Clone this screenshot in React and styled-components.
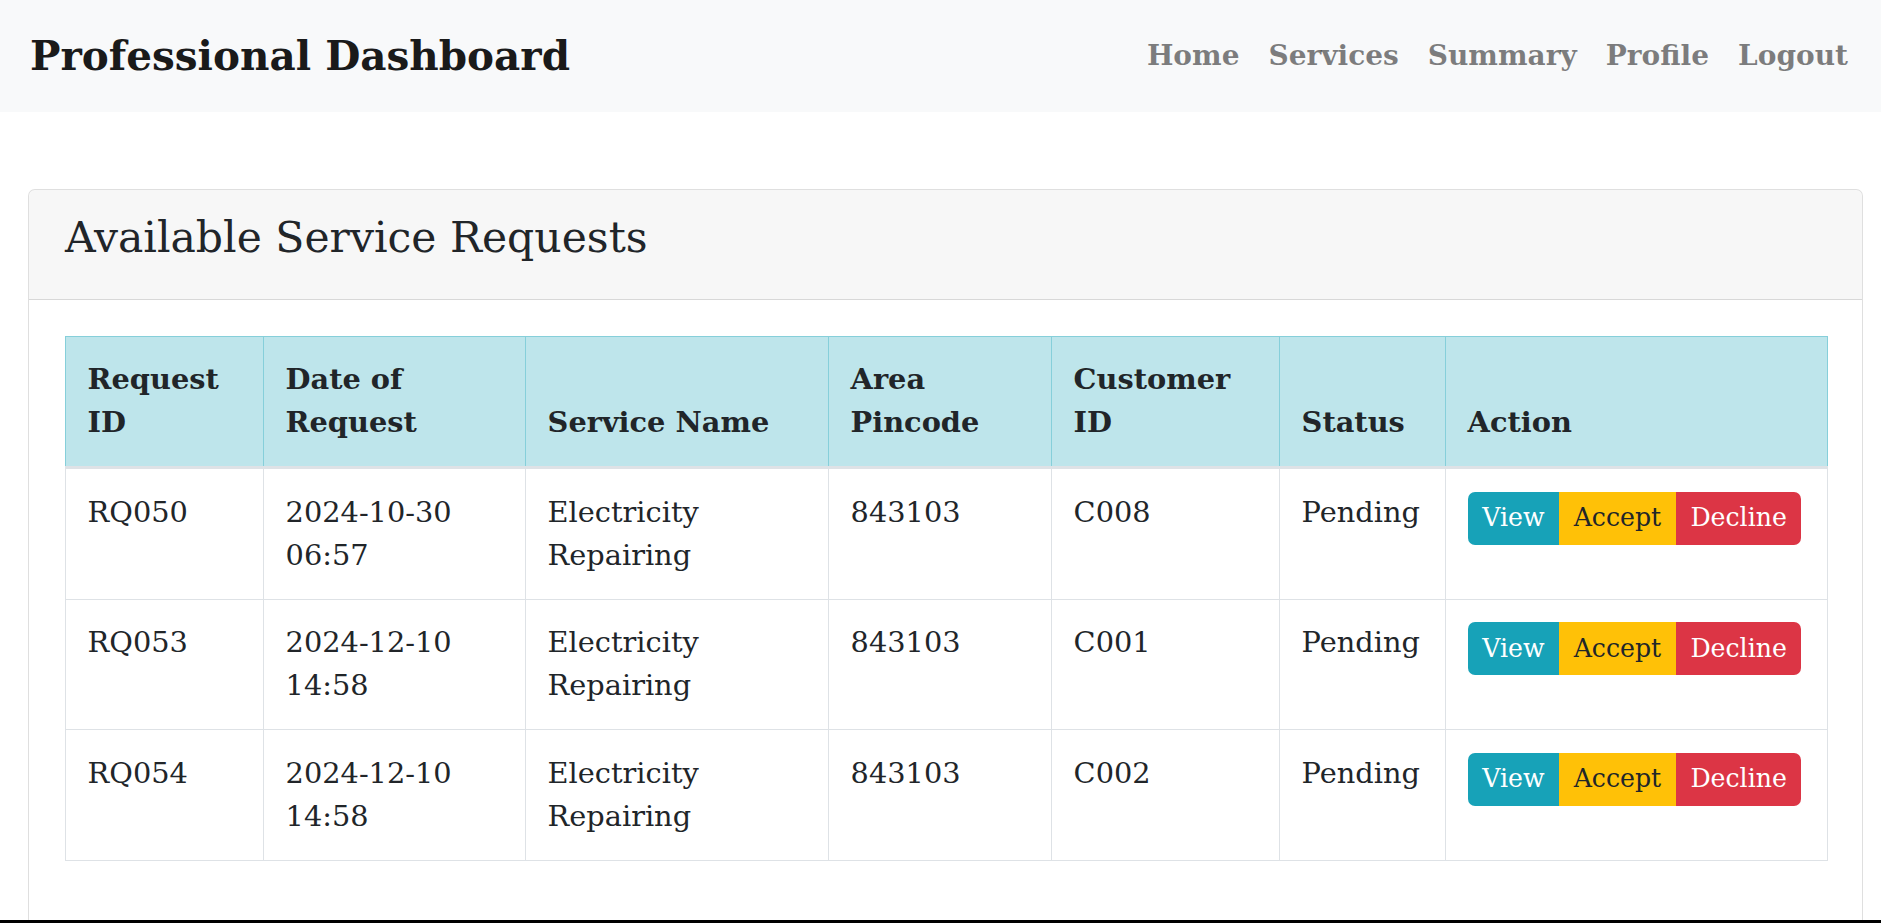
import React from 'react'
import styled, { createGlobalStyle } from 'styled-components'

const GlobalStyle = createGlobalStyle`
  html, body {
    margin: 0;
    padding: 0;
    background: #fff;
  }
  body {
    font-family: "DejaVu Serif", "Liberation Serif", serif;
    font-size: 28.8px;
    line-height: 1.5;
    color: #212529;
  }
`

const Navbar = styled.nav`
  display: flex;
  align-items: center;
  justify-content: space-between;
  height: 112px;
  padding: 0 33px 0 30px;
  background: #f8f9fa;
  box-sizing: border-box;
`

const Brand = styled.div`
  font-size: 40.5px;
  font-weight: 700;
  line-height: 1.2;
  color: #1a1a1a;
`

const NavLinks = styled.div`
  display: flex;
  gap: 29px;
`

const NavLink = styled.a`
  font-size: 28px;
  font-weight: 700;
  color: rgba(0, 0, 0, 0.5);
  text-decoration: none;
`

const Main = styled.main`
  padding: 77px 18px 0 28px;
`

const Card = styled.section`
  border: 1px solid rgba(0, 0, 0, 0.125);
  border-radius: 7px;
  background: #fff;
`

const CardHeader = styled.header`
  padding: 21.6px 36px;
  background: rgba(0, 0, 0, 0.03);
  border-bottom: 1px solid rgba(0, 0, 0, 0.125);
  border-radius: 7px 7px 0 0;
`

const Title = styled.h4`
  margin: 0 0 14.4px;
  font-size: 42.5px;
  font-weight: 400;
  line-height: 1.2;
`

const CardBody = styled.div`
  padding: 36px;
`

const Table = styled.table`
  width: 100%;
  table-layout: fixed;
  border-collapse: collapse;
  margin-bottom: 29px;
  border: 1px solid #dee2e6;
`

const Th = styled.th`
  padding: 21.6px;
  text-align: left;
  vertical-align: bottom;
  font-weight: 700;
  background: #bee5eb;
  border: 1px solid #86cfda;
  border-bottom: 3px solid #dee2e6;
`

const Td = styled.td`
  padding: 21.6px;
  vertical-align: top;
  border: 1px solid #dee2e6;
`

const BtnGroup = styled.div`
  display: inline-flex;
  margin-top: 1px;
  border-radius: 7px;
  overflow: hidden;
`

const tones = {
  info: { bg: '#17a2b8', fg: '#fff' },
  warning: { bg: '#ffc107', fg: '#212529' },
  danger: { bg: '#dc3545', fg: '#fff' },
}

const Btn = styled.button`
  height: 53px;
  padding: 0 14.6px;
  border: none;
  font-family: inherit;
  font-size: 25.2px;
  line-height: 1.5;
  background: ${(p) => tones[p.$tone].bg};
  color: ${(p) => tones[p.$tone].fg};
  cursor: pointer;
`

const BottomEdge = styled.div`
  position: fixed;
  left: 0;
  right: 0;
  bottom: 0;
  height: 3px;
  background: #000;
`

const columns = [
  { label: 'Request ID', width: 198 },
  { label: 'Date of Request', width: 262 },
  { label: 'Service Name', width: 303 },
  { label: 'Area Pincode', width: 223 },
  { label: 'Customer ID', width: 228 },
  { label: 'Status', width: 166 },
  { label: 'Action', width: 382 },
]

const requests = [
  { id: 'RQ050', date: '2024-10-30 06:57', service: 'Electricity Repairing', pin: '843103', customer: 'C008', status: 'Pending' },
  { id: 'RQ053', date: '2024-12-10 14:58', service: 'Electricity Repairing', pin: '843103', customer: 'C001', status: 'Pending' },
  { id: 'RQ054', date: '2024-12-10 14:58', service: 'Electricity Repairing', pin: '843103', customer: 'C002', status: 'Pending' },
]

export default function App() {
  return (
    <>
      <GlobalStyle />
      <Navbar>
        <Brand>Professional Dashboard</Brand>
        <NavLinks>
          {['Home', 'Services', 'Summary', 'Profile', 'Logout'].map((l) => (
            <NavLink key={l} href="#">{l}</NavLink>
          ))}
        </NavLinks>
      </Navbar>
      <Main>
        <Card>
          <CardHeader>
            <Title>Available Service Requests</Title>
          </CardHeader>
          <CardBody>
            <Table>
              <colgroup>
                {columns.map((c) => (
                  <col key={c.label} style={{ width: c.width }} />
                ))}
              </colgroup>
              <thead>
                <tr>
                  {columns.map((c) => (
                    <Th key={c.label}>{c.label}</Th>
                  ))}
                </tr>
              </thead>
              <tbody>
                {requests.map((r) => (
                  <tr key={r.id}>
                    <Td>{r.id}</Td>
                    <Td>{r.date}</Td>
                    <Td>{r.service}</Td>
                    <Td>{r.pin}</Td>
                    <Td>{r.customer}</Td>
                    <Td>{r.status}</Td>
                    <Td>
                      <BtnGroup>
                        <Btn $tone="info">View</Btn>
                        <Btn $tone="warning">Accept</Btn>
                        <Btn $tone="danger">Decline</Btn>
                      </BtnGroup>
                    </Td>
                  </tr>
                ))}
              </tbody>
            </Table>
          </CardBody>
        </Card>
      </Main>
      <BottomEdge />
    </>
  )
}
